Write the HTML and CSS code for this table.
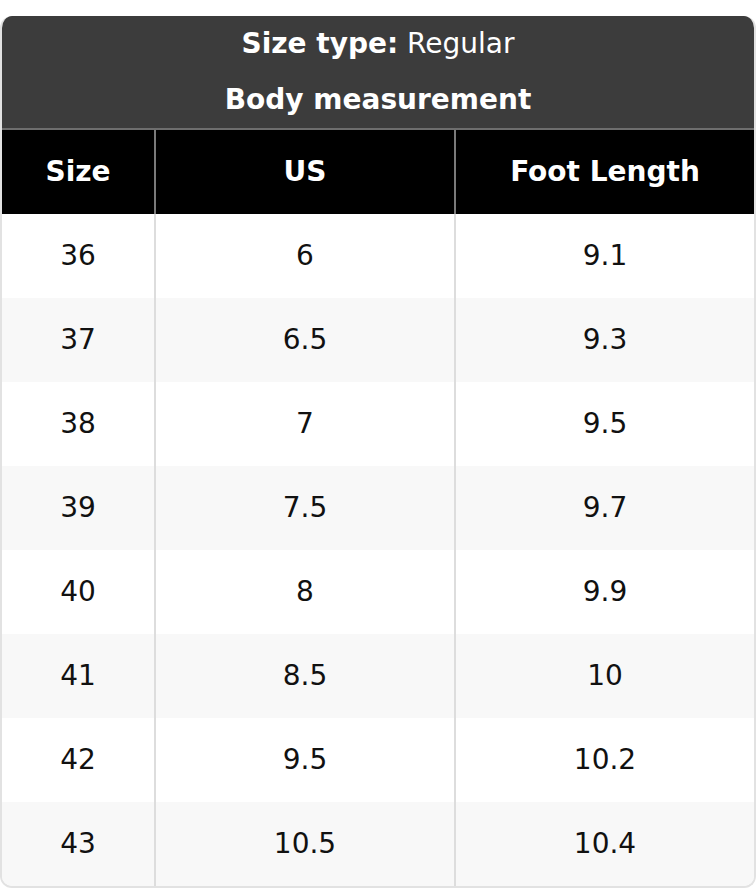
FILE: index.html
```html
<!DOCTYPE html>
<html>
<head>
<meta charset="utf-8">
<link rel="stylesheet" href="styles.css">
</head>
<body>
<div class="card">
  <div class="title-row"><span><b>Size type:</b> Regular</span></div>
  <div class="title-row"><span><b>Body measurement</b></span></div>
  <table class="sizes">
    <thead>
      <tr><th class="c1">Size</th><th class="c2">US</th><th class="c3">Foot Length</th></tr>
    </thead>
    <tbody>
      <tr><td>36</td><td>6</td><td>9.1</td></tr>
      <tr><td>37</td><td>6.5</td><td>9.3</td></tr>
      <tr><td>38</td><td>7</td><td>9.5</td></tr>
      <tr><td>39</td><td>7.5</td><td>9.7</td></tr>
      <tr><td>40</td><td>8</td><td>9.9</td></tr>
      <tr><td>41</td><td>8.5</td><td>10</td></tr>
      <tr><td>42</td><td>9.5</td><td>10.2</td></tr>
      <tr><td>43</td><td>10.5</td><td>10.4</td></tr>
    </tbody>
  </table>
</div>
</body>
</html>
```
FILE: styles.css
```css
html, body {
  margin: 0;
  padding: 0;
  background: #ffffff;
}
body {
  padding-top: 16px;
  font-family: "DejaVu Sans", sans-serif;
  color: #111111;
}
.card {
  width: 756px;
  box-sizing: border-box;
  border: 2px solid #e2e2e2;
  border-top: none;
  border-radius: 12px;
  overflow: hidden;
  background: #ffffff;
}
.title-row {
  height: 56px;
  display: flex;
  align-items: center;
  justify-content: center;
  background: #3c3c3c;
  color: #ffffff;
  font-size: 28px;
  line-height: 1;
  padding-bottom: 1px;
  box-sizing: border-box;
  margin: 0 -2px;
}
.sizes {
  width: 100%;
  border-collapse: collapse;
  table-layout: fixed;
}
.sizes th {
  background: #000000;
  color: #ffffff;
  font-weight: bold;
  font-size: 28px;
  line-height: 1;
  height: 84px;
  padding: 0;
  border-top: 2px solid #6e6e6e;
  border-left: 2px solid #7a7a7a;
}
.sizes th:first-child {
  border-left: none;
}
.c1 { width: 152px; }
.c2 { width: 298px; }
.sizes td {
  height: 84px;
  padding: 0;
  line-height: 1;
  text-align: center;
  font-size: 28px;
  border-left: 2px solid #dddddd;
}
.sizes td:first-child {
  border-left: none;
}
.sizes tbody tr:nth-child(even) td {
  background: #f8f8f8;
}
```
